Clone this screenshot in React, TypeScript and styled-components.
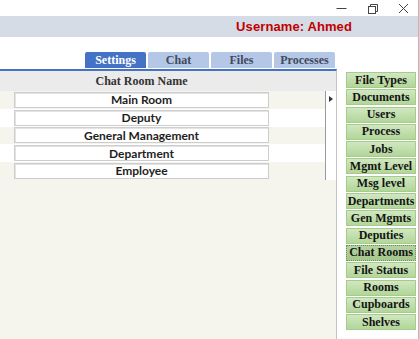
import React from "react";
import styled, { createGlobalStyle } from "styled-components";

const GlobalStyle = createGlobalStyle`
  html, body { margin: 0; padding: 0; background: #ffffff; }
  body { width: 419px; height: 339px; overflow: hidden; }
`;

const Window = styled.div`
  width: 419px;
  height: 339px;
  box-sizing: border-box;
  border-right: 1px solid #b9b9b9;
  display: flex;
  flex-direction: column;
  background: #ffffff;
  overflow: hidden;
`;

const TitleBar = styled.div`
  height: 16px;
  display: flex;
  justify-content: flex-end;
  align-items: center;
  padding-right: 8px;
  gap: 18px;
  background: #ffffff;
`;

const Control = styled.svg`
  width: 13px;
  height: 13px;
  display: block;
`;

const HeaderBar = styled.div`
  height: 21px;
  background: #d6dce5;
  display: flex;
  justify-content: flex-end;
  align-items: center;
  padding-right: 66px;
`;

const UserName = styled.span`
  font-family: "Liberation Sans", Arial, sans-serif;
  font-weight: 700;
  font-size: 13px;
  color: #c00000;
  letter-spacing: 0.1px;
`;

const TabStrip = styled.div`
  height: 32px;
  display: flex;
  align-items: flex-end;
  gap: 2px;
  padding-left: 85px;
`;

const Tab = styled.div<{ $active?: boolean }>`
  width: 61px;
  height: 16px;
  border-radius: 2px 2px 0 0;
  background: ${(p) => (p.$active ? "#4472c4" : "#b4c7e7")};
  color: ${(p) => (p.$active ? "#ffffff" : "#404a5a")};
  font-family: "Liberation Serif", "Times New Roman", serif;
  font-weight: 700;
  font-size: 12px;
  display: flex;
  align-items: center;
  justify-content: center;
  margin-bottom: 1px;
`;

const Main = styled.div`
  flex: 1;
  display: flex;
  min-height: 0;
`;

const GridPanel = styled.div`
  width: 337px;
  box-sizing: border-box;
  border-top: 2px solid #4472c4;
  border-right: 1px solid #c4c4c4;
  display: flex;
  flex-direction: column;
  background: #f5f5ed;
`;

const HeaderRow = styled.div`
  height: 20px;
  background: #ebebeb;
  display: flex;
  align-items: center;
`;

const HeaderLabel = styled.div`
  width: 255px;
  margin-left: 14px;
  text-align: center;
  font-family: "Liberation Serif", "Times New Roman", serif;
  font-weight: 700;
  font-size: 12px;
  color: #333333;
`;

const Row = styled.div<{ $alt: boolean }>`
  height: 17.75px;
  display: flex;
  align-items: stretch;
  background: ${(p) => (p.$alt ? "#ffffff" : "#f5f5ed")};
`;

const CellArea = styled.div`
  flex: 1;
  display: flex;
  align-items: center;
  padding-left: 14px;
`;

const Cell = styled.div`
  width: 255px;
  height: 16px;
  box-sizing: border-box;
  background: #ffffff;
  border: 1px solid #cdcdcd;
  box-shadow: inset 1px 1px 0 #e4e4e4;
  display: flex;
  align-items: center;
  justify-content: center;
  font-family: Lato, "Open Sans", sans-serif;
  font-weight: 700;
  font-size: 12px;
  color: #1e1e1e;
`;

const RowHeader = styled.div`
  width: 10px;
  border-left: 1px solid #9a9a9a;
  background: #ffffff;
  display: flex;
  align-items: center;
  justify-content: center;
`;

const Pointer = styled.div`
  width: 0;
  height: 0;
  border-top: 3px solid transparent;
  border-bottom: 3px solid transparent;
  border-left: 4px solid #333333;
  margin-top: -2px;
`;

const Filler = styled.div`
  flex: 1;
  background: #f5f5ed;
`;

const SidePanel = styled.div`
  flex: 1;
  background: #ffffff;
  display: flex;
  flex-direction: column;
  gap: 1.3px;
  padding: 3px 0 0 9px;
`;

const SideButton = styled.div<{ $selected?: boolean }>`
  width: 70px;
  height: 16px;
  box-sizing: border-box;
  border: 1px ${(p) => (p.$selected ? "dotted #6f8f58" : "solid #a5cc8b")};
  background: ${(p) =>
    p.$selected
      ? "linear-gradient(#b5d39f, #a3c78a)"
      : "linear-gradient(#d0e7c0, #b2d69a)"};
  display: flex;
  align-items: center;
  justify-content: center;
  font-family: "Liberation Serif", "Times New Roman", serif;
  font-weight: 700;
  font-size: 12px;
  color: #141414;
  white-space: nowrap;
`;

const rooms = ["Main Room", "Deputy", "General Management", "Department", "Employee"];

const sideItems = [
  "File Types",
  "Documents",
  "Users",
  "Process",
  "Jobs",
  "Mgmt Level",
  "Msg level",
  "Departments",
  "Gen Mgmts",
  "Deputies",
  "Chat Rooms",
  "File Status",
  "Rooms",
  "Cupboards",
  "Shelves",
];

const tabs = ["Settings", "Chat", "Files", "Processes"];

export default function App() {
  return (
    <>
      <GlobalStyle />
      <Window>
        <TitleBar>
          <Control viewBox="0 0 13 13">
            <line x1="1.5" y1="6.5" x2="11.5" y2="6.5" stroke="#444" strokeWidth="1" />
          </Control>
          <Control viewBox="0 0 13 13">
            <rect x="2.5" y="4.5" width="7" height="7" fill="none" stroke="#444" strokeWidth="1" />
            <path d="M4.5 4.5 V2.5 H11.5 V9.5 H9.5" fill="none" stroke="#444" strokeWidth="1" />
          </Control>
          <Control viewBox="0 0 13 13">
            <path d="M2 2 L11 11 M11 2 L2 11" stroke="#444" strokeWidth="1" />
          </Control>
        </TitleBar>
        <HeaderBar>
          <UserName>Username: Ahmed</UserName>
        </HeaderBar>
        <TabStrip>
          {tabs.map((t, i) => (
            <Tab key={t} $active={i === 0}>
              {t}
            </Tab>
          ))}
        </TabStrip>
        <Main>
          <GridPanel>
            <HeaderRow>
              <HeaderLabel>Chat Room Name</HeaderLabel>
            </HeaderRow>
            {rooms.map((r, i) => (
              <Row key={r} $alt={i % 2 === 1}>
                <CellArea>
                  <Cell>{r}</Cell>
                </CellArea>
                <RowHeader>{i === 0 && <Pointer />}</RowHeader>
              </Row>
            ))}
            <Filler />
          </GridPanel>
          <SidePanel>
            {sideItems.map((s) => (
              <SideButton key={s} $selected={s === "Chat Rooms"}>
                {s}
              </SideButton>
            ))}
          </SidePanel>
        </Main>
      </Window>
    </>
  );
}
